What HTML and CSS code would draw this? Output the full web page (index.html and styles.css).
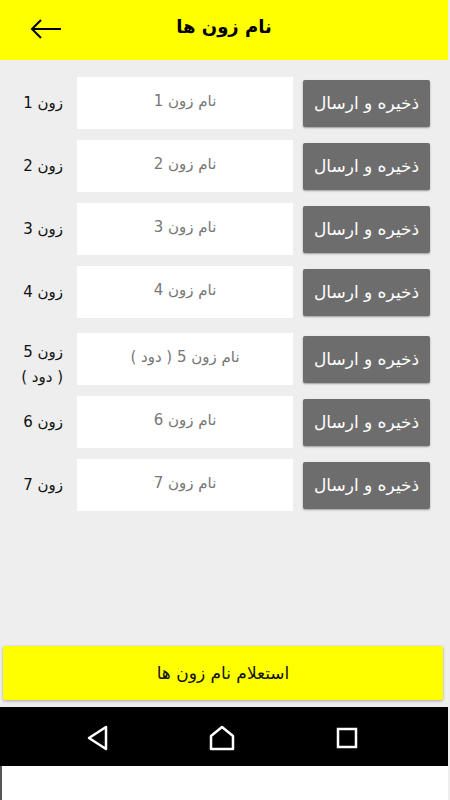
FILE: index.html
```html
<!DOCTYPE html>
<html lang="fa">
<head>
<meta charset="utf-8">
<title>نام زون ها</title>
<link rel="stylesheet" href="styles.css">
</head>
<body>
<div class="app">
  <div class="toolbar">
    <svg class="back" width="34" height="24" viewBox="0 0 34 24">
      <path d="M32 12 H3 M12 3 L3 12 L12 21" fill="none" stroke="#000" stroke-width="2"/>
    </svg>
    <div class="title">نام زون ها</div>
  </div>

  <div class="content">
    <div class="zone-row">
      <div class="send-btn">ذخیره و ارسال</div>
      <div class="zone-input">نام زون 1</div>
      <div class="zone-label">زون 1</div>
    </div>
    <div class="zone-row">
      <div class="send-btn">ذخیره و ارسال</div>
      <div class="zone-input">نام زون 2</div>
      <div class="zone-label">زون 2</div>
    </div>
    <div class="zone-row">
      <div class="send-btn">ذخیره و ارسال</div>
      <div class="zone-input">نام زون 3</div>
      <div class="zone-label">زون 3</div>
    </div>
    <div class="zone-row">
      <div class="send-btn">ذخیره و ارسال</div>
      <div class="zone-input">نام زون 4</div>
      <div class="zone-label">زون 4</div>
    </div>
    <div class="zone-row zone-row-tall">
      <div class="send-btn">ذخیره و ارسال</div>
      <div class="zone-input">نام زون 5 ( دود )</div>
      <div class="zone-label">زون 5<br>( دود )</div>
    </div>
    <div class="zone-row">
      <div class="send-btn">ذخیره و ارسال</div>
      <div class="zone-input">نام زون 6</div>
      <div class="zone-label">زون 6</div>
    </div>
    <div class="zone-row">
      <div class="send-btn">ذخیره و ارسال</div>
      <div class="zone-input">نام زون 7</div>
      <div class="zone-label">زون 7</div>
    </div>

    <div class="spacer"></div>
    <div class="query-btn">استعلام نام زون ها</div>
  </div>

  <div class="navbar">
    <svg width="24" height="26" viewBox="0 0 24 26">
      <path d="M20 2 L3 13 L20 24 Z" fill="none" stroke="#fff" stroke-width="2.5" stroke-linejoin="round"/>
    </svg>
    <svg width="26" height="26" viewBox="0 0 26 26">
      <path d="M2 24 V11 L13 2 L24 11 V24 Z" fill="none" stroke="#fff" stroke-width="2.5" stroke-linejoin="round"/>
    </svg>
    <svg width="22" height="22" viewBox="0 0 22 22">
      <rect x="2" y="2" width="18" height="18" fill="none" stroke="#fff" stroke-width="2.5"/>
    </svg>
  </div>
  <div class="below"></div>
</div>
</body>
</html>
```

FILE: styles.css
```css
* {
  box-sizing: border-box;
  margin: 0;
  padding: 0;
}

body {
  background-color: #eeeeee;
  font-family: "DejaVu Sans", "Noto Sans", sans-serif;
}

.app {
  width: 448px;
  height: 800px;
  display: flex;
  flex-direction: column;
}

.toolbar {
  height: 60px;
  background-color: #ffff00;
  display: flex;
  align-items: center;
  position: relative;
}

.back {
  margin-left: 29px;
  margin-top: -2px;
}

.title {
  position: absolute;
  left: 0;
  right: 0;
  top: 16px;
  text-align: center;
  font-size: 18px;
  font-weight: bold;
  color: #000;
  direction: rtl;
}

.content {
  flex: 1;
  display: flex;
  flex-direction: column;
  padding-top: 17px;
}

.zone-row {
  display: flex;
  flex-direction: row-reverse;
  align-items: center;
  height: 52px;
  margin-bottom: 11px;
  padding-right: 18px;
}

.zone-row-tall {
  margin-top: 4px;
}

.send-btn {
  width: 127px;
  height: 47px;
  background-color: #6d6d6d;
  border-radius: 2px;
  box-shadow: 0 1px 2px rgba(0, 0, 0, 0.35);
  color: #fff;
  font-size: 17px;
  display: flex;
  align-items: center;
  justify-content: center;
  direction: rtl;
}

.zone-input {
  width: 216px;
  height: 52px;
  margin-right: 10px;
  background-color: #fff;
  color: #777;
  font-size: 15px;
  display: flex;
  align-items: center;
  justify-content: center;
  direction: rtl;
  padding-bottom: 4px;
}

.zone-label {
  flex: 1;
  text-align: right;
  padding-right: 14px;
  font-size: 15px;
  color: #111;
  direction: rtl;
  line-height: 25px;
}

.zone-row-tall .zone-label {
  padding-top: 12px;
}

.spacer {
  flex: 1;
}

.query-btn {
  margin: 0 5px 7px 3px;
  height: 54px;
  background-color: #ffff00;
  border-radius: 2px;
  box-shadow: 0 1px 3px rgba(0, 0, 0, 0.3);
  display: flex;
  align-items: center;
  justify-content: center;
  font-size: 17px;
  color: #111;
  direction: rtl;
}

.navbar {
  height: 59px;
  background-color: #000;
  display: flex;
  align-items: center;
  padding-top: 2px;
}

.navbar svg:nth-child(1) {
  margin-left: 86px;
}

.navbar svg:nth-child(2) {
  margin-left: 99px;
}

.navbar svg:nth-child(3) {
  margin-left: 101px;
}

.below {
  height: 34px;
  background-color: #fff;
  border-left: 2px solid #555;
}
```
